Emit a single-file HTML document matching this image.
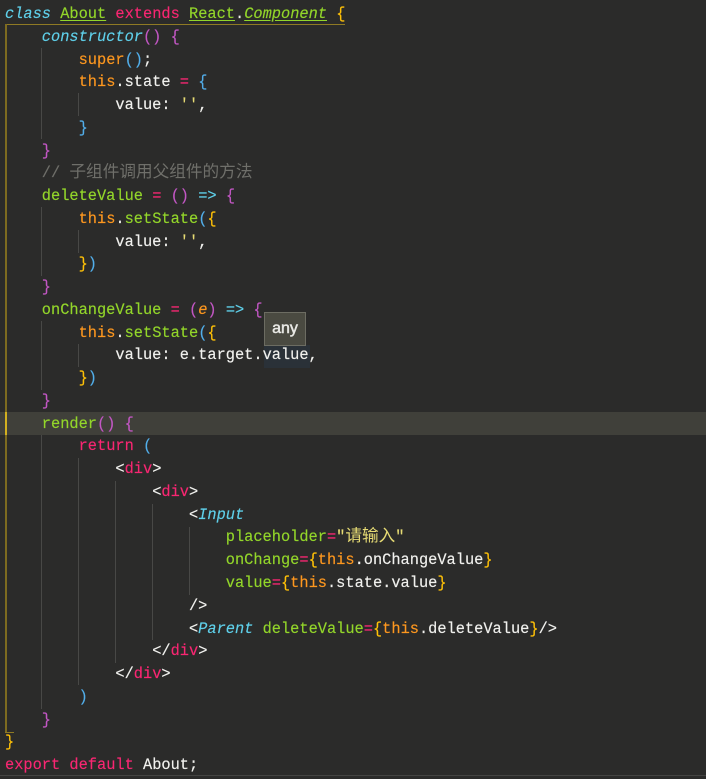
<!DOCTYPE html>
<html>
<head>
<meta charset="utf-8">
<style>
html,body{margin:0;padding:0;background:#2b2b2a;}
#w{position:relative;width:706px;height:779px;overflow:hidden;background:#2b2b2a;font-family:"Liberation Mono","Noto Sans CJK SC",monospace;font-size:15.33px;color:#f1f1ee;-webkit-text-stroke:.15px;}
.l{position:absolute;left:5px;height:23px;line-height:23px;white-space:pre;margin-top:1.5px;}
.g{position:absolute;width:1px;background:#484846;}
.k{color:#f92672}.t{color:#fd971f}.n{color:#93d62a}.f{color:#5fd0ea}.i{font-style:italic}
.u{text-decoration:underline;text-underline-offset:2px}
.c{color:#6f6f6a}.s{color:#e6db74}.y{color:#ffc107}.b{color:#52aeea}.m{color:#c257c4}.w{color:#f1f1ee}
.cj{font-size:16.65px;font-family:"Noto Sans CJK SC",sans-serif;-webkit-text-stroke:0;line-height:1}
</style>
</head>
<body>
<div id="w">
<div style="position:absolute;left:0;top:412px;width:706px;height:23px;background:#40403a"></div>
<div style="position:absolute;left:264px;top:345px;width:46px;height:23px;background:#2a3138"></div>

<div style="position:absolute;left:5px;top:24px;width:340px;height:1px;background:#8f7a24"></div>
<div style="position:absolute;left:5px;top:24px;width:2px;height:708px;background:#7d6b20"></div>
<div style="position:absolute;left:5px;top:732px;width:9px;height:1px;background:#8f7a24"></div>
<div style="position:absolute;left:5px;top:412px;width:2px;height:23px;background:#d2b020"></div>

<div class="g" style="left:41px;top:48px;height:91px"></div>
<div class="g" style="left:78px;top:93px;height:23px"></div>
<div class="g" style="left:41px;top:207px;height:69px"></div>
<div class="g" style="left:78px;top:230px;height:23px"></div>
<div class="g" style="left:41px;top:321px;height:69px"></div>
<div class="g" style="left:78px;top:344px;height:23px"></div>
<div class="g" style="left:41px;top:435px;height:274px"></div>
<div class="g" style="left:78px;top:458px;height:227px"></div>
<div class="g" style="left:115px;top:481px;height:182px"></div>
<div class="g" style="left:152px;top:504px;height:136px"></div>
<div class="g" style="left:189px;top:527px;height:68px"></div>

<div class="l" style="top:1.5px"><span class="f i">class</span> <span class="n u">About</span> <span class="k">extends</span> <span class="n u">React</span><span class="w">.</span><span class="n i u">Component</span> <span class="y">{</span></div>
<div class="l" style="top:24.3px">    <span class="f i">constructor</span><span class="m">()</span> <span class="m">{</span></div>
<div class="l" style="top:47px">        <span class="t">super</span><span class="b">()</span><span class="w">;</span></div>
<div class="l" style="top:69.8px">        <span class="t">this</span><span class="w">.state</span> <span class="k">=</span> <span class="b">{</span></div>
<div class="l" style="top:92.5px">            <span class="w">value:</span> <span class="s">''</span><span class="w">,</span></div>
<div class="l" style="top:115.3px">        <span class="b">}</span></div>
<div class="l" style="top:138.1px">    <span class="m">}</span></div>
<div class="l" style="top:160.8px">    <span class="c">// <span class="cj">子组件调用父组件的方法</span></span></div>
<div class="l" style="top:183.6px">    <span class="n">deleteValue</span> <span class="k">=</span> <span class="m">()</span> <span class="f">=&gt;</span> <span class="m">{</span></div>
<div class="l" style="top:206.3px">        <span class="t">this</span><span class="w">.</span><span class="n">setState</span><span class="b">(</span><span class="y">{</span></div>
<div class="l" style="top:229.1px">            <span class="w">value:</span> <span class="s">''</span><span class="w">,</span></div>
<div class="l" style="top:251.8px">        <span class="y">}</span><span class="b">)</span></div>
<div class="l" style="top:274.6px">    <span class="m">}</span></div>
<div class="l" style="top:297.4px">    <span class="n">onChangeValue</span> <span class="k">=</span> <span class="m">(</span><span class="t i">e</span><span class="m">)</span> <span class="f">=&gt;</span> <span class="m">{</span></div>
<div class="l" style="top:320.1px">        <span class="t">this</span><span class="w">.</span><span class="n">setState</span><span class="b">(</span><span class="y">{</span></div>
<div class="l" style="top:342.9px">            <span class="w">value: e.target.value,</span></div>
<div class="l" style="top:365.6px">        <span class="y">}</span><span class="b">)</span></div>
<div class="l" style="top:388.4px">    <span class="m">}</span></div>
<div class="l" style="top:411.2px">    <span class="n">render</span><span class="m">()</span> <span class="m">{</span></div>
<div class="l" style="top:433.9px">        <span class="k">return</span> <span class="b">(</span></div>
<div class="l" style="top:456.7px">            <span class="w">&lt;</span><span class="k">div</span><span class="w">&gt;</span></div>
<div class="l" style="top:479.4px">                <span class="w">&lt;</span><span class="k">div</span><span class="w">&gt;</span></div>
<div class="l" style="top:502.2px">                    <span class="w">&lt;</span><span class="f i">Input</span></div>
<div class="l" style="top:524.9px">                        <span class="n">placeholder</span><span class="k">=</span><span class="s">"<span class="cj">请输入</span>"</span></div>
<div class="l" style="top:547.7px">                        <span class="n">onChange</span><span class="k">=</span><span class="y">{</span><span class="t">this</span><span class="w">.onChangeValue</span><span class="y">}</span></div>
<div class="l" style="top:570.5px">                        <span class="n">value</span><span class="k">=</span><span class="y">{</span><span class="t">this</span><span class="w">.state.value</span><span class="y">}</span></div>
<div class="l" style="top:593.2px">                    <span class="w">/&gt;</span></div>
<div class="l" style="top:616px">                    <span class="w">&lt;</span><span class="f i">Parent</span> <span class="n">deleteValue</span><span class="k">=</span><span class="y">{</span><span class="t">this</span><span class="w">.deleteValue</span><span class="y">}</span><span class="w">/&gt;</span></div>
<div class="l" style="top:638.7px">                <span class="w">&lt;/</span><span class="k">div</span><span class="w">&gt;</span></div>
<div class="l" style="top:661.5px">            <span class="w">&lt;/</span><span class="k">div</span><span class="w">&gt;</span></div>
<div class="l" style="top:684.3px">        <span class="b">)</span></div>
<div class="l" style="top:707px">    <span class="m">}</span></div>
<div class="l" style="top:729.8px"><span class="y">}</span></div>
<div class="l" style="top:752.5px"><span class="k">export</span> <span class="k">default</span> <span class="w">About;</span></div>

<div style="position:absolute;left:264px;top:312px;width:40px;height:32px;background:#4a4a41;border:1px solid #6c6c62;color:#e8e8e4;font-family:'Liberation Sans',sans-serif;font-size:16px;-webkit-text-stroke:.5px;line-height:31px;text-align:center">any</div>
<div style="position:absolute;left:0;top:775px;width:706px;height:1px;background:#444442"></div>
</div>
</body>
</html>
